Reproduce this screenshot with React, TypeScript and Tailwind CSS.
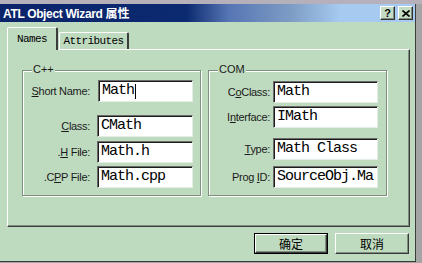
const sans = "font-['Liberation_Sans',Arial,sans-serif]";
const mono = "font-['Liberation_Mono','Courier_New',monospace]";

function Field({
  value,
  width,
  caret,
}: {
  value: string;
  width: string;
  caret?: boolean;
}) {
  return (
    <div
      className={`${width} h-[22px] bg-white border border-t-[#6b6b6b] border-l-[#6b6b6b] border-b-[#e4eee4] border-r-[#e4eee4] shadow-[inset_1px_1px_0_#1c1c1c] flex items-center pl-[3px] ${mono} text-[15px] tracking-[-1px] text-black whitespace-nowrap overflow-hidden`}
    >
      {value}
      {caret && <span className="w-px h-[15px] bg-black ml-[1px]" />}
    </div>
  );
}

function Row({
  label,
  labelWidth,
  gap,
  children,
}: {
  label: React.ReactNode;
  labelWidth: string;
  gap: string;
  children: React.ReactNode;
}) {
  return (
    <div className={`flex items-center ${gap}`}>
      <div
        className={`${labelWidth} text-right ${sans} text-[11px] tracking-[-0.3px] text-[#1a1a1a] leading-none`}
      >
        {label}
      </div>
      {children}
    </div>
  );
}

function Group({
  title,
  children,
}: {
  title: string;
  children: React.ReactNode;
}) {
  return (
    <div className="relative w-[179px] h-[126px] border border-[#7d8f7d] shadow-[1px_1px_0_#fff,inset_1px_1px_0_#fff]">
      <span
        className={`absolute -top-[7px] left-[9px] px-[1px] bg-[#bfdbbf] ${sans} text-[11px] leading-none text-[#1a1a1a]`}
      >
        {title}
      </span>
      {children}
    </div>
  );
}

function Button({ label, primary }: { label: string; primary?: boolean }) {
  return (
    <div
      className={`w-[74px] h-[21px] ${
        primary ? "border border-black" : ""
      } flex`}
    >
      <div className="flex-1 flex items-center justify-center border border-t-white border-l-white border-b-[#3a3a3a] border-r-[#3a3a3a] shadow-[inset_-1px_-1px_0_#7f8f7f] font-['Noto_Sans_CJK_SC',sans-serif] text-[12px] leading-none text-black">
        {label}
      </div>
    </div>
  );
}

function CaptionButton({ children }: { children: React.ReactNode }) {
  return (
    <div className="w-[15px] h-[14px] bg-[#c4dcc4] border border-t-white border-l-white border-b-[#303030] border-r-[#303030] shadow-[inset_-1px_-1px_0_#7f8f7f] flex items-center justify-center">
      {children}
    </div>
  );
}

export default function App() {
  return (
    <div className="w-[422px] h-[263px] bg-[#a4a4a4] overflow-hidden">
      <div className="h-[4px] bg-[#b5b0ba]" />
      <div className="w-[416px] h-[258px] bg-[#bfdbbf] border-r border-b border-[#3c3c3c] flex flex-col">
        {/* title bar */}
        <div className="h-[18px] bg-[linear-gradient(to_right,#0a246a_0%,#0c2a70_45%,#5675b4_55%,#7d9cc4_70%,#a6caf0_82%,#a6caf0_100%)] flex items-center pl-[3px] pr-[2px]">
          <span
            className={`${sans} font-bold text-[12px] tracking-[-0.35px] text-white leading-none`}
          >
            ATL Object Wizard{" "}
            <span className="font-['Noto_Sans_CJK_SC',sans-serif] tracking-normal">
              属性
            </span>
          </span>
          <div className="ml-auto flex gap-[3px]">
            <CaptionButton>
              <span className={`${sans} font-bold text-[11px] leading-none text-black`}>
                ?
              </span>
            </CaptionButton>
            <CaptionButton>
              <svg width="8" height="7" viewBox="0 0 8 7">
                <path d="M0.5 0.5 L7.5 6.5 M7.5 0.5 L0.5 6.5" stroke="#000" strokeWidth="1.6" />
              </svg>
            </CaptionButton>
          </div>
        </div>

        {/* tabs */}
        <div className="ml-[7px] mt-[5px] flex items-end">
          <div
            className={`relative z-10 -mb-px h-[23px] w-[51px] bg-[#bfdbbf] border-t border-l border-white border-r-2 border-r-[#3c3c3c] rounded-t-[2px] flex items-center justify-center ${mono} text-[11px] tracking-[-0.6px] text-black`}
          >
            Names
          </div>
          <div
            className={`h-[17px] w-[70px] ml-[1px] border-t border-l border-white border-r-2 border-r-[#3c3c3c] rounded-t-[2px] flex items-center justify-center ${mono} text-[11px] tracking-[-0.6px] text-black`}
          >
            Attributes
          </div>
        </div>

        {/* tab panel */}
        <div className="ml-[7px] w-[403px] h-[178px] border-t border-l border-white border-r border-b border-r-[#3c3c3c] border-b-[#3c3c3c] shadow-[inset_-1px_-1px_0_#7f8f7f] flex gap-[7px] pl-[14px] pt-[20px]">
          <Group title="C++">
            <div className="flex flex-col pt-[9px]">
              <Row
                label={
                  <>
                    <span className="underline">S</span>hort Name:
                  </>
                }
                labelWidth="w-[67px]"
                gap="gap-[8px]"
              >
                <Field value="Math" width="w-[95px]" caret />
              </Row>
              <div className="h-[13px]" />
              <Row
                label={
                  <>
                    <span className="underline">C</span>lass:
                  </>
                }
                labelWidth="w-[67px]"
                gap="gap-[7px]"
              >
                <Field value="CMath" width="w-[96px]" />
              </Row>
              <div className="h-[4px]" />
              <Row
                label={
                  <>
                    .<span className="underline">H</span> File:
                  </>
                }
                labelWidth="w-[67px]"
                gap="gap-[7px]"
              >
                <Field value="Math.h" width="w-[96px]" />
              </Row>
              <div className="h-[3px]" />
              <Row
                label={
                  <>
                    .C<span className="underline">P</span>P File:
                  </>
                }
                labelWidth="w-[67px]"
                gap="gap-[7px]"
              >
                <Field value="Math.cpp" width="w-[96px]" />
              </Row>
            </div>
          </Group>
          <Group title="COM">
            <div className="flex flex-col pt-[10px]">
              <Row
                label={
                  <>
                    C<span className="underline">o</span>Class:
                  </>
                }
                labelWidth="w-[61px]"
                gap="gap-[3px]"
              >
                <Field value="Math" width="w-[105px]" />
              </Row>
              <div className="h-[3px]" />
              <Row
                label={
                  <>
                    I<span className="underline">n</span>terface:
                  </>
                }
                labelWidth="w-[61px]"
                gap="gap-[3px]"
              >
                <Field value="IMath" width="w-[105px]" />
              </Row>
              <div className="h-[10px]" />
              <Row
                label={
                  <>
                    <span className="underline">T</span>ype:
                  </>
                }
                labelWidth="w-[61px]"
                gap="gap-[3px]"
              >
                <Field value="Math Class" width="w-[105px]" />
              </Row>
              <div className="h-[6px]" />
              <Row
                label={
                  <>
                    Prog <span className="underline">I</span>D:
                  </>
                }
                labelWidth="w-[61px]"
                gap="gap-[3px]"
              >
                <Field value="SourceObj.Ma" width="w-[105px]" />
              </Row>
            </div>
          </Group>
        </div>

        {/* buttons */}
        <div className="flex justify-end gap-[7px] pr-[6px] mt-[6px]">
          <Button label="确定" primary />
          <Button label="取消" />
        </div>
      </div>
    </div>
  );
}
